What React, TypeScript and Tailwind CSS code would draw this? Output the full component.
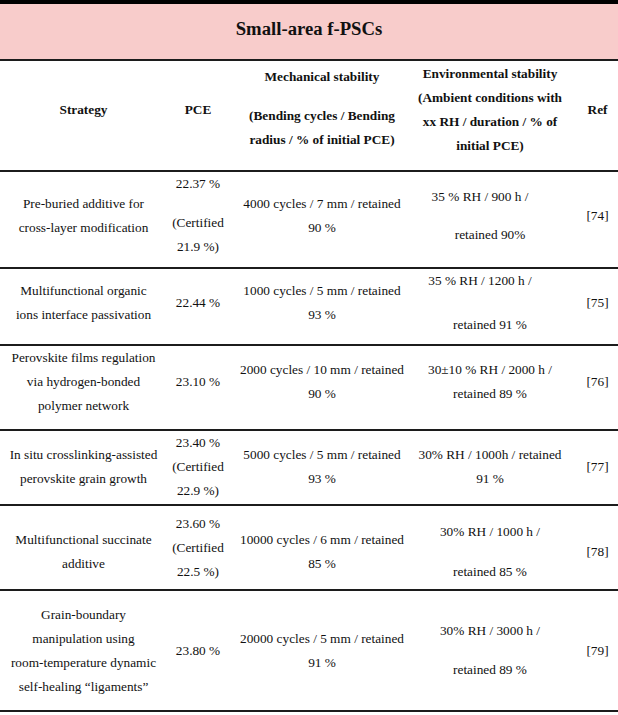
import type { ReactNode } from "react";

const grid = "grid grid-cols-[167px_62px_186px_150px_53px]";

const Cell = ({ children, className = "" }: { children: ReactNode; className?: string }) => (
  <div className={`flex flex-col items-center justify-center text-center ${className}`}>{children}</div>
);

const L = ({ children, className = "" }: { children: ReactNode; className?: string }) => (
  <p className={`whitespace-nowrap ${className}`}>{children}</p>
);

const Divider = () => <div className="h-[2px] bg-[#1c1c1c]" />;

type Row = {
  h: string;
  pb: string;
  pcePb?: string;
  strategy: string[];
  pce: ReactNode;
  mech: string[];
  env: ReactNode;
  ref: string;
};

const rows: Row[] = [
  {
    h: "h-[95px]",
    pb: "pb-[18px]",
    strategy: ["Pre-buried additive for", "cross-layer modification"],
    pce: (
      <>
        <L>22.37 %</L>
        <L className="mt-[15px]">(Certified</L>
        <L>21.9 %)</L>
      </>
    ),
    mech: ["4000 cycles / 7 mm / retained", "90 %"],
    env: (
      <>
        <L className="pr-[20px]">35 % RH / 900 h /</L>
        <L className="mt-[14px]">retained 90%</L>
      </>
    ),
    ref: "[74]",
  },
  {
    h: "h-[75px]",
    pb: "pb-[12px]",
    strategy: ["Multifunctional organic", "ions interface passivation"],
    pce: <L>22.44 %</L>,
    mech: ["1000 cycles / 5 mm / retained", "93 %"],
    env: (
      <>
        <L className="pr-[20px]">35 % RH / 1200 h /</L>
        <L className="mt-[20px]">retained 91 %</L>
      </>
    ),
    ref: "[75]",
  },
  {
    h: "h-[83px]",
    pb: "pb-[13px]",
    strategy: ["Perovskite films regulation", "via hydrogen-bonded", "polymer network"],
    pce: <L>23.10 %</L>,
    mech: ["2000 cycles / 10 mm / retained", "90 %"],
    env: (
      <>
        <L>30±10 % RH / 2000 h /</L>
        <L>retained 89 %</L>
      </>
    ),
    ref: "[76]",
  },
  {
    h: "h-[73px]",
    pb: "pb-[2px]",
    strategy: ["In situ crosslinking-assisted", "perovskite grain growth"],
    pce: (
      <>
        <L>23.40 %</L>
        <L>(Certified</L>
        <L>22.9 %)</L>
      </>
    ),
    mech: ["5000 cycles / 5 mm / retained", "93 %"],
    env: (
      <>
        <L>30% RH / 1000h / retained</L>
        <L>91 %</L>
      </>
    ),
    ref: "[77]",
  },
  {
    h: "h-[83px]",
    pb: "pt-[8px]",
    pcePb: "pb-0",
    strategy: ["Multifunctional succinate", "additive"],
    pce: (
      <>
        <L>23.60 %</L>
        <L>(Certified</L>
        <L>22.5 %)</L>
      </>
    ),
    mech: ["10000 cycles / 6 mm / retained", "85 %"],
    env: (
      <>
        <L>30% RH / 1000 h /</L>
        <L className="mt-[16px]">retained 85 %</L>
      </>
    ),
    ref: "[78]",
  },
  {
    h: "h-[119px]",
    pb: "pb-0",
    strategy: [
      "Grain-boundary",
      "manipulation using",
      "room-temperature dynamic",
      "self-healing \u201cligaments\u201d",
    ],
    pce: <L>23.80 %</L>,
    mech: ["20000 cycles / 5 mm / retained", "91 %"],
    env: (
      <>
        <L>30% RH / 3000 h /</L>
        <L className="mt-[15px]">retained 89 %</L>
      </>
    ),
    ref: "[79]",
  },
];

export default function App() {
  return (
    <div className="w-[618px] h-[715px] bg-white [font-family:'Liberation_Serif','Times_New_Roman',serif] text-[13.3px] leading-[24px] text-[#111]">
      <div className="h-[4px] bg-black" />
      <div className="h-[55px] bg-[#f8cccb] flex items-center justify-center pb-[6px]">
        <h1 className="text-[18.7px] font-bold">Small-area f-PSCs</h1>
      </div>
      <Divider />

      <div className={`${grid} h-[109px] font-bold`}>
        <Cell className="pb-[11px]">
          <L>Strategy</L>
        </Cell>
        <Cell className="pb-[11px]">
          <L>PCE</L>
        </Cell>
        <Cell className="pb-[14px]">
          <L>Mechanical stability</L>
          <L className="mt-[15px]">(Bending cycles / Bending</L>
          <L>radius / % of initial PCE)</L>
        </Cell>
        <Cell className="pb-[11px]">
          <L>Environmental stability</L>
          <L>(Ambient conditions with</L>
          <L>xx RH / duration / % of</L>
          <L>initial PCE)</L>
        </Cell>
        <Cell className="pb-[11px] pl-[12px]">
          <L>Ref</L>
        </Cell>
      </div>
      <Divider />

      {rows.map((r) => (
        <div key={r.ref}>
          <div className={`${grid} ${r.h}`}>
            <Cell className={r.pb}>
              {r.strategy.map((s) => (
                <L key={s}>{s}</L>
              ))}
            </Cell>
            <Cell className={r.pcePb ?? r.pb}>{r.pce}</Cell>
            <Cell className={r.pb}>
              {r.mech.map((s) => (
                <L key={s}>{s}</L>
              ))}
            </Cell>
            <Cell className={r.pb}>{r.env}</Cell>
            <Cell className={`${r.pb} pl-[12px]`}>
              <L>{r.ref}</L>
            </Cell>
          </div>
          <Divider />
        </div>
      ))}
    </div>
  );
}
